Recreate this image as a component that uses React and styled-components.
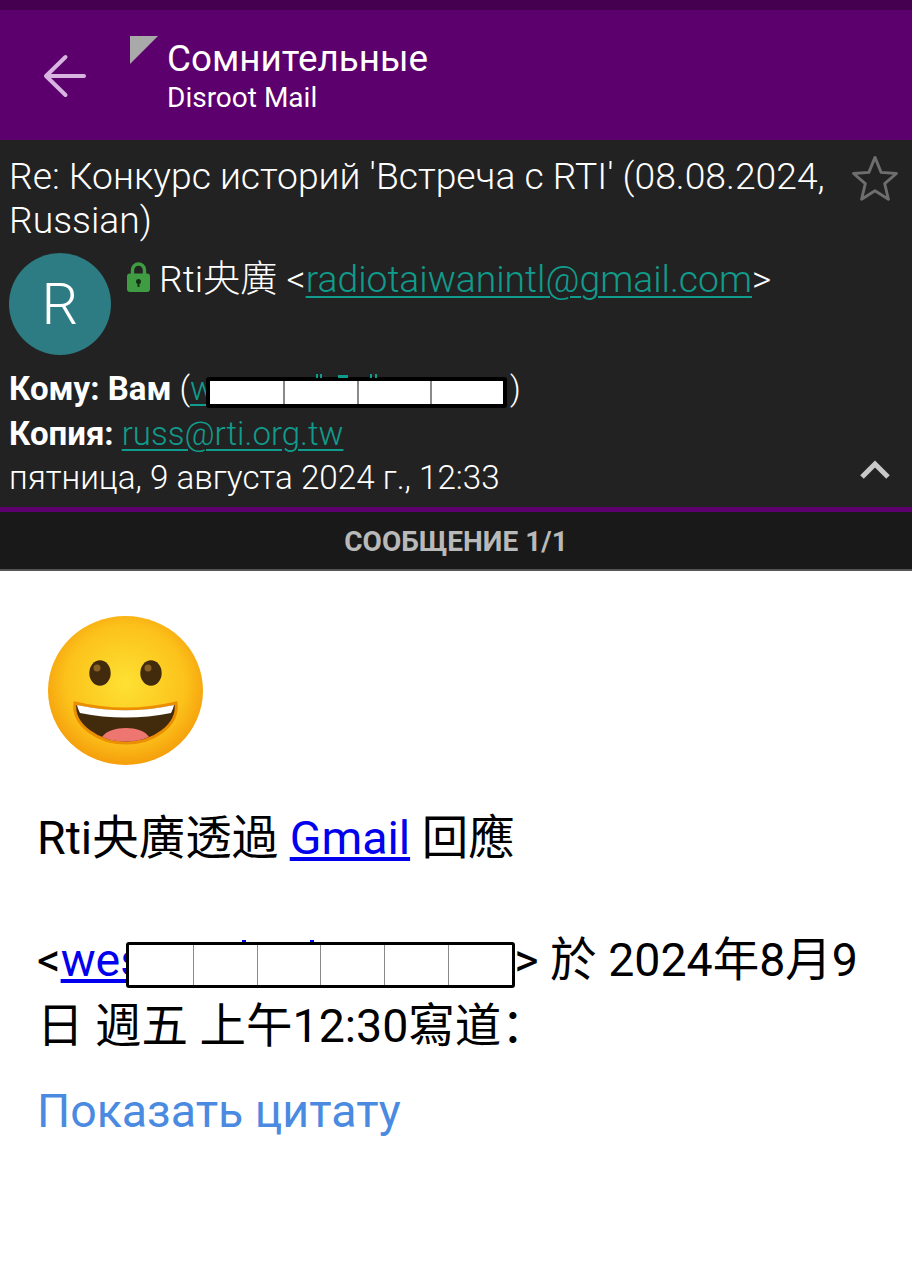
import React from "react";
import styled, { createGlobalStyle } from "styled-components";

const GlobalStyle = createGlobalStyle`
  html, body {
    margin: 0;
    padding: 0;
    background: #ffffff;
  }
  body {
    font-family: Roboto, "Noto Sans CJK SC", sans-serif;
  }
`;

const Screen = styled.div`
  width: 912px;
  height: 1280px;
  overflow: hidden;
  background: #fff;
`;

const StatusBar = styled.div`
  height: 10px;
  background: #45004f;
`;

const AppBar = styled.header`
  height: 130px;
  background: #5c006d;
  display: flex;
  align-items: flex-start;
`;

const BackButton = styled.div`
  width: 130px;
  height: 130px;
  flex: none;
  display: flex;
  padding: 44px 0 0 43px;
  box-sizing: border-box;
  svg {
    display: block;
  }
`;

const FolderMark = styled.svg`
  flex: none;
  margin: 26px 10px 0 0;
`;

const AppTitles = styled.div`
  padding-top: 26px;
  margin-left: -1px;
  color: #fff;
`;

const FolderName = styled.div`
  font-size: 36.8px;
  line-height: 46px;
`;

const AccountName = styled.div`
  font-size: 28px;
  line-height: 31px;
`;

const MessageHeader = styled.section`
  background: #222222;
  height: 367px;
  box-sizing: border-box;
  padding: 14px 10px 0 9px;
  color: #fff;
  font-weight: 300;
  position: relative;
`;

const SubjectRow = styled.div`
  display: flex;
  justify-content: space-between;
  height: 96px;
`;

const Subject = styled.div`
  width: 830px;
  font-size: 37.25px;
  line-height: 44px;
  font-weight: 300;
`;

const StarIcon = styled.svg`
  flex: none;
  margin: 1px 4px 0 0;
`;

const SenderRow = styled.div`
  display: flex;
  height: 117px;
`;

const Avatar = styled.div`
  width: 102px;
  height: 102px;
  border-radius: 50%;
  background: #2d7b83;
  color: #fff;
  font-size: 58px;
  font-weight: 300;
  display: flex;
  align-items: center;
  justify-content: center;
  flex: none;
  margin: 3px 16px 0 0;
`;

const SenderLine = styled.div`
  display: flex;
  align-items: flex-start;
  font-size: 37.25px;
  line-height: 44px;
  padding-top: 7px;
  white-space: nowrap;
`;

const LockIcon = styled.svg`
  flex: none;
  margin: 5px 9px 0 0;
`;

const MailLink = styled.a`
  color: #109c8c;
  text-decoration: underline;
  text-underline-offset: 4px;
  text-decoration-thickness: 2px;
`;

const InfoLine = styled.div`
  font-size: 33px;
  line-height: 44.5px;
  white-space: nowrap;
  position: relative;
  b {
    font-weight: 700;
  }
`;

const DateLine = styled(InfoLine)`
  font-size: 33.2px;
`;

const Redaction = styled.span`
  position: absolute;
  box-sizing: border-box;
  display: grid;
  grid-template-columns: repeat(${(p) => p.$cells}, 1fr);
  background: #fff;
  left: ${(p) => p.$left}px;
  top: ${(p) => p.$top}px;
  width: ${(p) => p.$width}px;
  height: ${(p) => p.$height}px;
  border: ${(p) => p.$border}px solid #000;
  border-radius: 3px;
  span + span {
    border-left: ${(p) => (p.$border > 3 ? 2 : 1)}px solid #8a8a8a;
  }
`;

/* bits of the hidden address that stick out above the censor box */
const Peek = styled.i`
  position: absolute;
  top: -${(p) => p.$rise}px;
  left: ${(p) => p.$left}px;
  width: ${(p) => p.$width}px;
  height: ${(p) => p.$rise - 3}px;
  background: ${(p) => p.$color};
`;

const HiddenGap = styled.span`
  display: inline-block;
  width: ${(p) => p.$width}px;
`;

const CollapseIcon = styled.svg`
  position: absolute;
  right: 22px;
  top: 320px;
`;

const Divider = styled.div`
  height: 5px;
  background: #5c006d;
`;

const Pager = styled.div`
  height: 57px;
  background: #191919;
  color: #b9b9b9;
  font-size: 28px;
  font-weight: 700;
  line-height: 60px;
  text-align: center;
  border-bottom: 2px solid #555;
`;

const Body = styled.main`
  padding: 44px 37px 0 37px;
  color: #000;
  font-size: 46.5px;
  line-height: 66px;
`;

const Smiley = styled.svg`
  display: block;
  margin: 0 0 0 9px;
`;

const Paragraph = styled.p`
  margin: ${(p) => p.$top}px 0 0 0;
  position: relative;
  a {
    color: #0000ee;
  }
`;

const QuoteToggle = styled.div`
  color: #4a8ae0;
  font-size: 46.5px;
  line-height: 52px;
  margin-top: 26px;
`;

export default function App() {
  return (
    <Screen>
      <GlobalStyle />
      <StatusBar />
      <AppBar>
        <BackButton>
          <svg width="44" height="44" viewBox="0 0 44 44" fill="none" stroke="#d7b5e0" strokeWidth="4" strokeLinecap="round" strokeLinejoin="round">
            <path d="M41 22H3M22.500 3L3 22l19.500 19" />
          </svg>
        </BackButton>
        <FolderMark width="28" height="28" viewBox="0 0 28 28">
          <path d="M0 0h28L0 28z" fill="#a9a9a9" />
        </FolderMark>
        <AppTitles>
          <FolderName>Сомнительные</FolderName>
          <AccountName>Disroot Mail</AccountName>
        </AppTitles>
      </AppBar>
      <MessageHeader>
        <SubjectRow>
          <Subject>Re: Конкурс историй 'Встреча с RTI' (08.08.2024, Russian)</Subject>
          <StarIcon width="46" height="46" viewBox="0 0 48 48" fill="none" stroke="#6e6e6e" strokeWidth="3" strokeLinejoin="round">
            <path d="M24 2.500l6.400 15.600 16 1.200-12.300 10.600 3.900 16.300L24 37.400l-14 8.800 3.900-16.300L1.600 19.300l16-1.200z" />
          </StarIcon>
        </SubjectRow>
        <SenderRow>
          <Avatar>R</Avatar>
          <SenderLine>
            <LockIcon width="23" height="30" viewBox="0 0 23 30">
              <path d="M5.500 14V8a6 6 0 0 1 12 0v6" fill="none" stroke="#3f9c42" strokeWidth="3.400" />
              <rect x="0" y="11.500" width="23" height="18.500" rx="3" fill="#3f9c42" />
              <circle cx="11.500" cy="19.500" r="2.500" fill="#12300f" />
              <rect x="10.500" y="20" width="2" height="5" fill="#12300f" />
            </LockIcon>
            <span>
              Rti央廣 &lt;<MailLink>radiotaiwanintl@gmail.com</MailLink>&gt;
            </span>
          </SenderLine>
        </SenderRow>
        <InfoLine>
          <b>Кому: Вам</b> (<MailLink>w</MailLink>
          <Redaction $left={197} $top={10} $width={301} $height={31} $cells={4} $border={4}>
            <Peek $rise={7} $left={106} $width={2} $color="#109c8c" />
            <Peek $rise={7} $left={110} $width={2} $color="#109c8c" />
            <Peek $rise={6} $left={128} $width={10} $color="#109c8c" />
            <Peek $rise={7} $left={160} $width={2} $color="#109c8c" />
            <Peek $rise={7} $left={165} $width={2} $color="#109c8c" />
            <span /><span /><span /><span />
          </Redaction>
          <HiddenGap $width={295} />)
        </InfoLine>
        <InfoLine>
          <b>Копия:</b> <MailLink>russ@rti.org.tw</MailLink>
        </InfoLine>
        <DateLine>пятница, 9 августа 2024 г., 12:33</DateLine>
        <CollapseIcon width="30" height="20" viewBox="0 0 30 20" fill="none" stroke="#c9c9c9" strokeWidth="5">
          <path d="M2 17L15 4l13 13" />
        </CollapseIcon>
      </MessageHeader>
      <Divider />
      <Pager>СООБЩЕНИЕ 1/1</Pager>
      <Body>
        <Smiley width="160" height="152" viewBox="0 0 160 152">
          <defs>
            <radialGradient id="face" cx="50%" cy="45%" r="55%">
              <stop offset="0%" stopColor="#fee133" />
              <stop offset="70%" stopColor="#fcc21b" />
              <stop offset="100%" stopColor="#f59e0b" />
            </radialGradient>
          </defs>
          <ellipse cx="79.500" cy="75.500" rx="77.500" ry="74.500" fill="url(#face)" />
          <ellipse cx="54" cy="58" rx="10.700" ry="12.700" fill="#422b0d" />
          <ellipse cx="105" cy="58" rx="10.700" ry="12.700" fill="#422b0d" />
          <circle cx="51" cy="53" r="3.500" fill="#896024" />
          <circle cx="102" cy="53" r="3.500" fill="#896024" />
          <path d="M29 88c33 8 68 8 101 0 3 22-22 40-50 40S26 110 29 88z" fill="#422b0d" stroke="#eb8f00" strokeWidth="3" />
          <path d="M31 90c32 7 65 7 97 0-1 4-2 6-3 8-30 6-61 6-91 0-1-2-2-4-3-8z" fill="#fff" />
          <path d="M56 122c8-12 40-12 47 0-14 6-33 6-47 0z" fill="#ed7770" />
        </Smiley>
        <Paragraph $top={38}>
          Rti央廣透過 <a href="#gmail">Gmail</a> 回應
        </Paragraph>
        <Paragraph $top={56}>
          &lt;<a href="#sender">wes</a>
          <Redaction $left={89} $top={15} $width={389} $height={46} $cells={6} $border={3}>
            <Peek $rise={5} $left={113} $width={4} $color="#0000ee" />
            <Peek $rise={5} $left={181} $width={4} $color="#0000ee" />
            <span /><span /><span /><span /><span /><span />
          </Redaction>
          <HiddenGap $width={370} />&gt; 於 2024年8月9日 週五 上午12:30寫道：
        </Paragraph>
        <QuoteToggle>Показать цитату</QuoteToggle>
      </Body>
    </Screen>
  );
}
